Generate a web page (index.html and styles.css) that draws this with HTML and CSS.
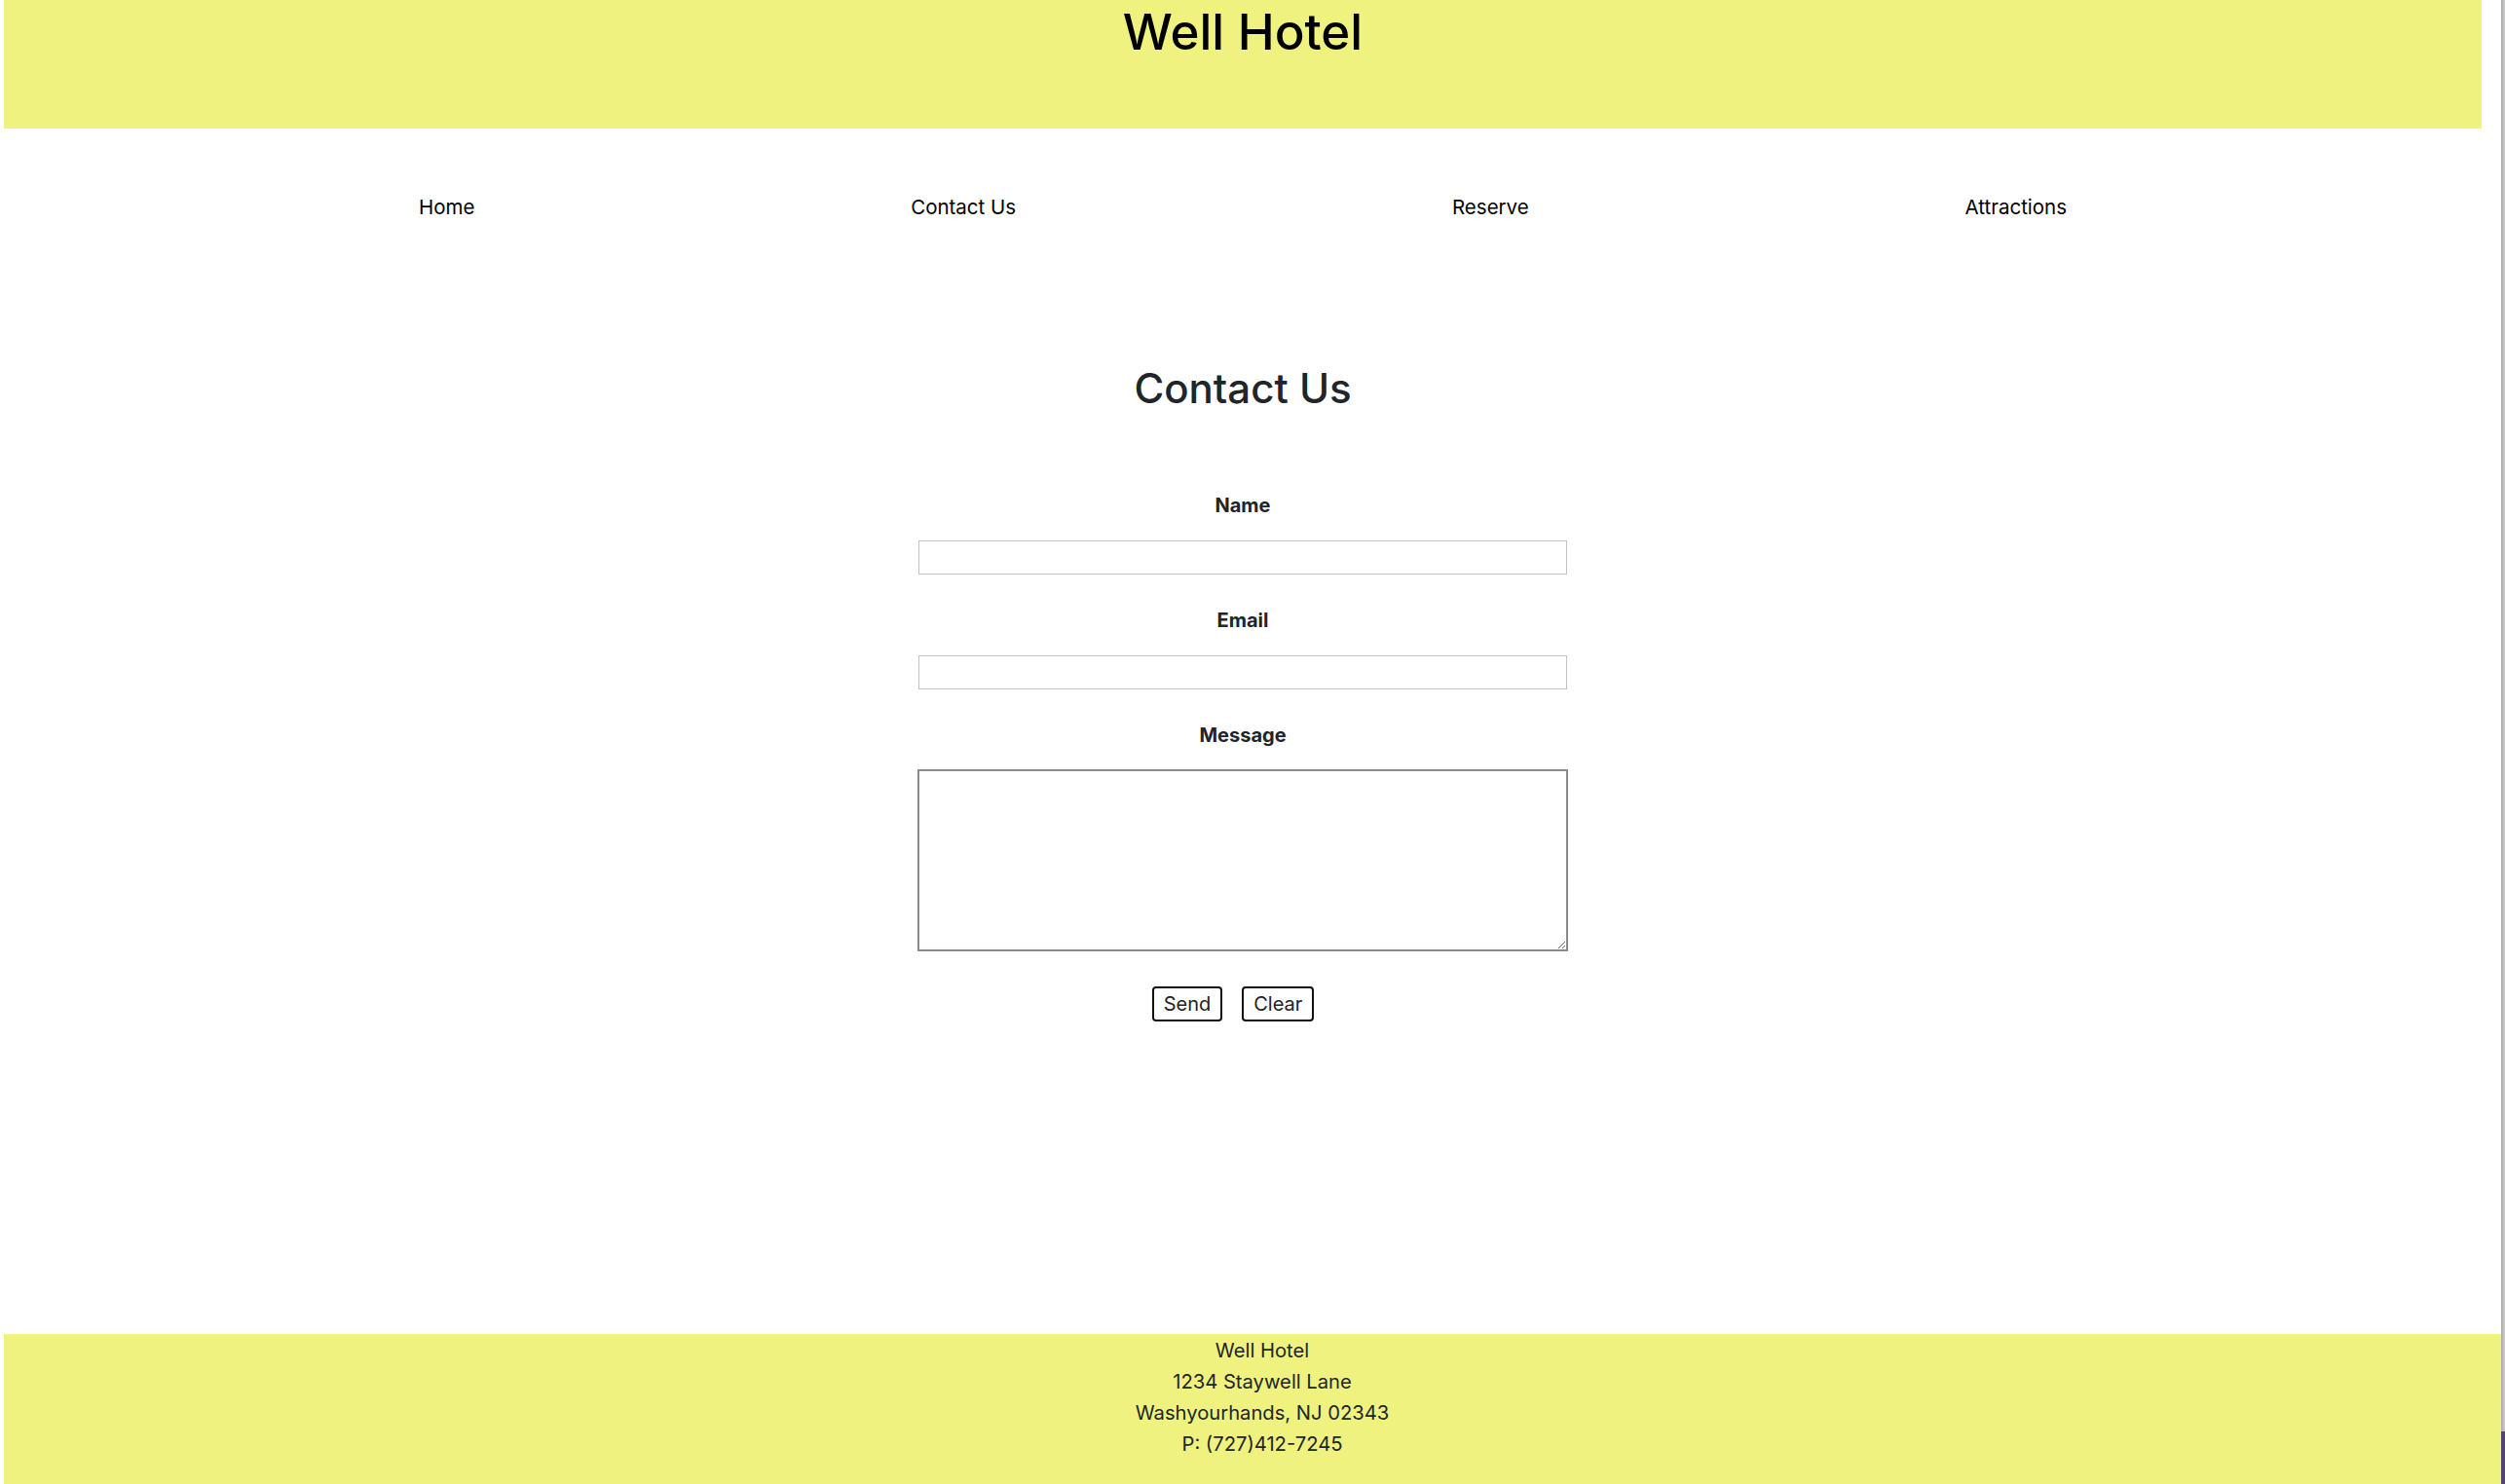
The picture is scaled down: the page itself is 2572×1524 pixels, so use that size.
FILE: index.html
```html
<!DOCTYPE html>
<html lang="en">
<head>
<meta charset="utf-8">
<title>Well Hotel - Contact Us</title>
<link rel="stylesheet" href="styles.css">
</head>
<body>
<div class="window">
  <div class="page">
    <header class="masthead">
      <h1 class="masthead-title">Well Hotel</h1>
    </header>
    <nav class="mainnav">
      <a class="mainnav-link" href="#">Home</a>
      <a class="mainnav-link" href="#">Contact Us</a>
      <a class="mainnav-link" href="#">Reserve</a>
      <a class="mainnav-link" href="#">Attractions</a>
    </nav>
    <main class="contact">
      <h2 class="contact-title">Contact Us</h2>
      <form class="contact-form">
        <label class="field-label" for="name">Name</label>
        <input class="field-input" id="name" type="text">
        <label class="field-label" for="email">Email</label>
        <input class="field-input" id="email" type="email">
        <label class="field-label" for="message">Message</label>
        <textarea class="field-area" id="message"></textarea>
        <div class="actions">
          <button class="btn" type="submit">Send</button>
          <button class="btn" type="reset">Clear</button>
        </div>
      </form>
    </main>
    <footer class="sitefoot">
      <div class="sitefoot-line">Well Hotel</div>
      <div class="sitefoot-line">1234 Staywell Lane</div>
      <div class="sitefoot-line">Washyourhands, NJ 02343</div>
      <div class="sitefoot-line">P: (727)412-7245</div>
    </footer>
  </div>
  <div class="edge">
    <div class="edge-desk"></div>
  </div>
</div>
</body>
</html>
```

FILE: styles.css
```css
html, body {
  margin: 0;
  padding: 0;
  background: #ffffff;
}

body {
  font-family: Inter, "Noto Sans", "Liberation Sans", sans-serif;
  color: #212529;
}

.window {
  display: flex;
  height: 1524px;
  overflow: hidden;
}

.page {
  flex: 1;
  display: flex;
  flex-direction: column;
  padding-left: 4px;
  min-width: 0;
}

.masthead {
  height: 132px;
  margin-right: 20px;
  background: #eff27f;
  text-align: center;
}

.masthead-title {
  margin: 0;
  padding-top: 3px;
  font-size: 51px;
  line-height: 60px;
  font-weight: 500;
  color: #000000;
}

.mainnav {
  width: 2140px;
  margin: 69px auto 0;
  position: relative;
  left: -10px;
  display: flex;
  justify-content: space-around;
}

.mainnav-link {
  font-size: 20.5px;
  line-height: 24px;
  color: #000000;
  text-decoration: none;
}

.contact {
  margin-right: 20px;
  display: flex;
  flex-direction: column;
  align-items: center;
}

.contact-title {
  margin: 149px 0 0;
  font-size: 42px;
  line-height: 50px;
  font-weight: 500;
  color: #212529;
}

.contact-form {
  width: 668px;
  margin-top: 83px;
  display: flex;
  flex-direction: column;
  align-items: center;
}

.field-label {
  font-size: 20px;
  line-height: 24px;
  font-weight: 700;
  color: #212529;
  margin-bottom: 24px;
}

.field-input {
  box-sizing: border-box;
  width: 666px;
  height: 35px;
  margin: 0 0 35px;
  border: 1px solid #c3c3c3;
  background: #ffffff;
  padding: 0 6px;
  font: inherit;
}

.field-area {
  box-sizing: border-box;
  width: 668px;
  height: 187px;
  margin: -1px 0 0;
  border: 2px solid #8c8c8c;
  background: #ffffff;
  padding: 4px;
  font: inherit;
  display: block;
}

.actions {
  margin-top: 36px;
  padding-right: 20px;
  display: flex;
  gap: 20px;
  justify-content: center;
}

.btn {
  box-sizing: border-box;
  height: 36px;
  padding: 4px 10px;
  border: 2px solid #111111;
  border-radius: 4px;
  background: #ffffff;
  font-family: inherit;
  font-size: 20px;
  line-height: 24px;
  color: #222222;
}

.sitefoot {
  margin-top: auto;
  height: 154px;
  box-sizing: border-box;
  padding: 1px 0 25px 20px;
  background: #eff27f;
  text-align: center;
}

.sitefoot-line {
  font-size: 20.2px;
  line-height: 32px;
  color: #212529;
}

.edge {
  width: 4px;
  flex: none;
  display: flex;
  flex-direction: column;
  justify-content: flex-end;
  background: linear-gradient(to right, #a9a9a9, #cfcfcf);
}

.edge-desk {
  height: 54px;
  background: #4f4377;
}
```
